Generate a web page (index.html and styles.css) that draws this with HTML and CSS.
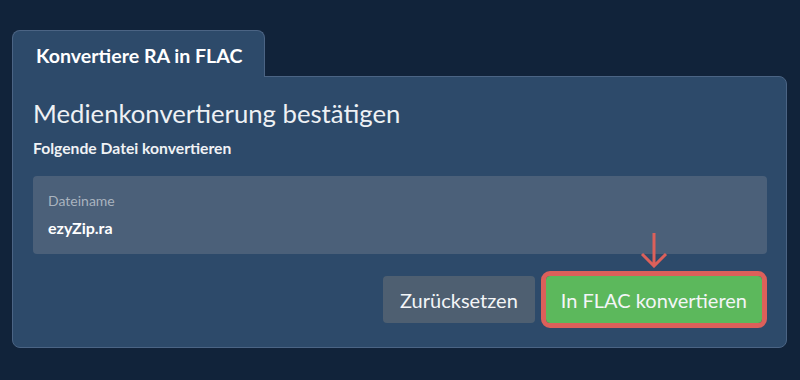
FILE: index.html
```html
<!DOCTYPE html>
<html>
<head>
  <meta charset="utf-8">
  <link rel="stylesheet" href="styles.css">
</head>
<body>
  <div class="card">
    <div class="tab">Konvertiere RA in FLAC</div>
    <div class="panel">
      <h1>Medienkonvertierung bestätigen</h1>
      <p class="subtitle">Folgende Datei konvertieren</p>
      <div class="field">
        <span class="field-label">Dateiname</span>
        <span class="field-value">ezyZip.ra</span>
      </div>
      <div class="actions">
        <button type="button" class="btn btn-reset">Zurücksetzen</button>
        <span class="highlight">
          <!-- pointer arrow over the main action -->
          <svg class="arrow" width="30" height="36" viewBox="0 0 30 36">
            <path d="M15 1 L15 34 M3 22 L15 34 L27 22" fill="none" stroke="#dc605a" stroke-width="3"/>
          </svg>
          <button type="button" class="btn btn-convert">In FLAC konvertieren</button>
        </span>
      </div>
    </div>
  </div>
</body>
</html>
```

FILE: styles.css
```css
body {
  margin: 0;
  background: #11233a;
  font-family: Lato, "Open Sans", sans-serif;
  color: #f0f2f5;
}

.card {
  padding: 30px 13px 0 12px;
}

.tab {
  position: relative;
  z-index: 1;
  display: inline-block;
  height: 46px;
  padding: 0 22px 0 23px;
  margin-bottom: -1px;
  background: #2d4a6a;
  border: 1px solid #4b6484;
  border-bottom: none;
  border-radius: 8px 8px 0 0;
  font-size: 19.6px;
  font-weight: bold;
  line-height: 50px;
  white-space: nowrap;
  color: #fff;
}

.panel {
  background: #2d4a6a;
  border: 1px solid #4b6484;
  border-radius: 0 8px 8px 8px;
  padding: 20px 19px 24px 20px;
}

h1 {
  margin: 0;
  font-size: 25.7px;
  font-weight: normal;
  line-height: 32px;
  color: #eef1f4;
}

.subtitle {
  margin: 9px 0 0;
  font-size: 15.7px;
  font-weight: bold;
  line-height: 20px;
}

.field {
  display: flex;
  flex-direction: column;
  margin-top: 18px;
  height: 78px;
  box-sizing: border-box;
  padding: 16px 15px 0;
  background: #4b6079;
  border-radius: 4px;
}

.field-label {
  font-size: 14px;
  line-height: 18px;
  color: #a9b3bf;
}

.field-value {
  margin-top: 7px;
  font-size: 16px;
  font-weight: bold;
  line-height: 22px;
  color: #fff;
}

.actions {
  display: flex;
  justify-content: flex-end;
  align-items: center;
  gap: 11px;
  margin-top: 22px;
  padding-right: 5px;
}

.btn {
  height: 47px;
  border: none;
  border-radius: 4px;
  font-family: inherit;
  font-size: 20px;
  color: #f3f5f7;
  padding: 0 17px;
}

.btn-reset {
  background: #4e5f71;
}

.highlight {
  position: relative;
  display: flex;
}

.btn-convert {
  background: #5cb85c;
  outline: 5px solid #dc605a;
  padding: 0 15px;
}

.arrow {
  position: absolute;
  left: 93px;
  top: -44px;
}
```
